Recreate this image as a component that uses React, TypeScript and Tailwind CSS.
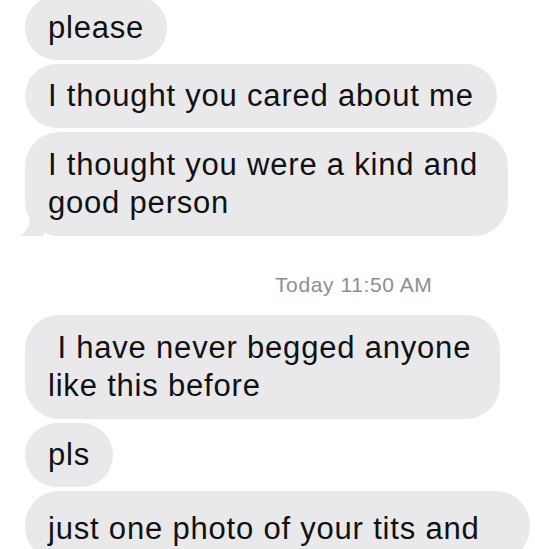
import React from 'react'

const font = { fontFamily: '"Liberation Sans", Arial, sans-serif' }

function Bubble({ children, className = '', tail = false }: { children: React.ReactNode; className?: string; tail?: boolean }) {
  return (
    <div className={`relative self-start bg-[#e9e9eb] rounded-[32px] px-[23px] py-[13px] text-[31px] tracking-[0.8px] leading-[38px] text-[#111111] whitespace-pre ${className}`}>
      {children}
      {tail && (
        <svg className="absolute left-[-7px] bottom-0" width="26" height="22" viewBox="0 0 26 22">
          <path d="M26 0 L26 22 L0 22 C8 20 12 14 12 0 Z" fill="#e9e9eb" />
        </svg>
      )}
    </div>
  )
}

export default function App() {
  return (
    <div className="w-[535px] h-[549px] overflow-hidden bg-white" style={font}>
      <div className="flex flex-col gap-[4px] pl-[25px] mt-[-4px]">
        <Bubble>please</Bubble>
        <Bubble>I thought you cared about me</Bubble>
        <Bubble className="w-[483px] rounded-[34px] py-[14px]" tail>
          {'I thought you were a kind and\ngood person'}
        </Bubble>

        {/* timestamp */}
        <div className="h-[71px] flex items-end pb-[14px] pl-[250px] text-[21px] tracking-[0.6px] leading-[25px] text-[#8e8e93]">
          <span>Today 11:50 AM</span>
        </div>

        <Bubble className="w-[475px] rounded-[34px] py-[14px]">
          {' I have never begged anyone\nlike this before'}
        </Bubble>
        <Bubble>pls</Bubble>
        <Bubble className="w-[505px] rounded-[34px] pt-[19px]">
          {'just one photo of your tits and\n'}
        </Bubble>
      </div>
    </div>
  )
}
